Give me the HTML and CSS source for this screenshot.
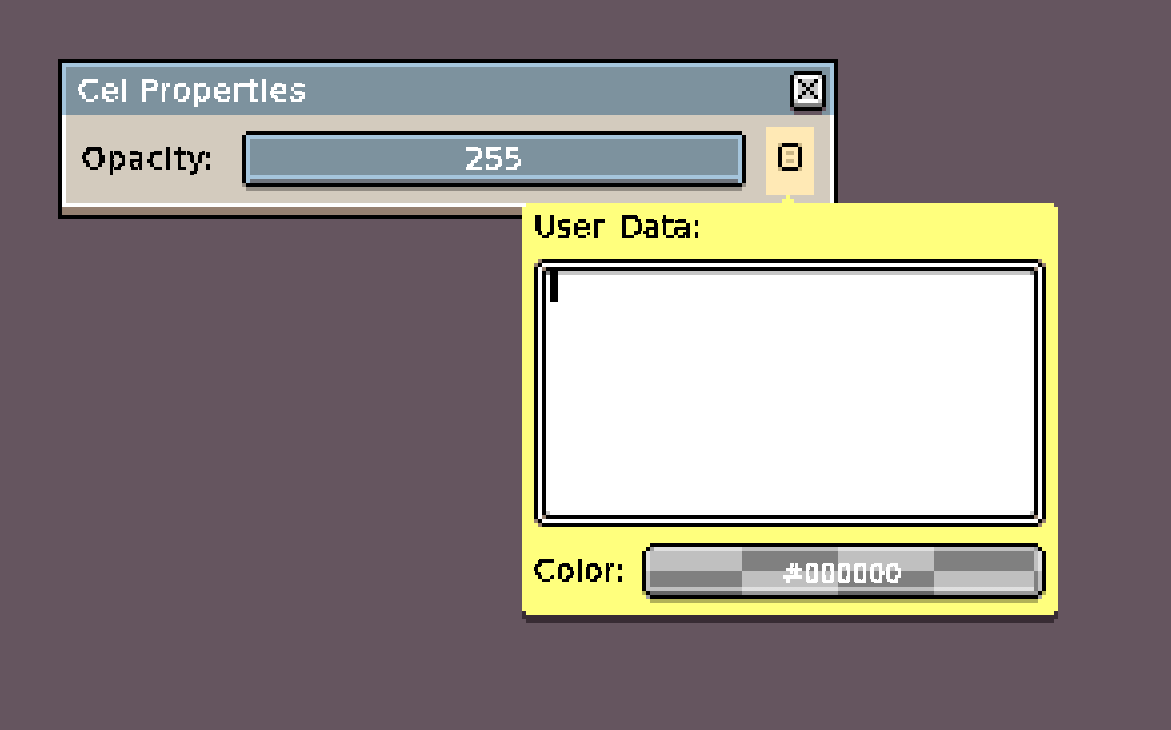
FILE: index.html
```html
<!DOCTYPE html>
<html lang="en">
<head>
<meta charset="utf-8">
<title>Cel Properties</title>
<link rel="stylesheet" href="styles.css">
</head>
<body>
<svg class="defs" width="0" height="0" aria-hidden="true">
  <filter id="px" x="0" y="0" width="100%" height="100%" color-interpolation-filters="sRGB">
    <feFlood x="1" y="1" width="2" height="2" flood-color="#000" result="dot"/>
    <feComposite in="dot" in2="dot" operator="over" x="0" y="0" width="4" height="4" result="cell"/>
    <feTile in="cell" result="grid"/>
    <feComposite in="SourceGraphic" in2="grid" operator="in"/>
    <feMorphology operator="dilate" radius="1"/>
    <feComponentTransfer><feFuncA type="discrete" tableValues="0 1 1 1"/></feComponentTransfer>
  </filter>
</svg>

<section class="window">
  <header class="titlebar">
    <span class="px title">Cel Properties</span>
    <svg class="close" width="36" height="44" viewBox="0 0 36 44" shape-rendering="crispEdges">
      <path fill="#000" d="M4 0h28v4H4zM0 4h4v32H0zM32 4h4v32h-4zM4 36h28v4H4z"/>
      <path fill="#65555f" d="M0 36h4v4H0zM32 36h4v4h-4zM4 40h28v4H4z"/>
      <path fill="#fff" d="M4 4h28v28H4z"/>
      <path fill="#c6c6c6" d="M8 8h20v20H8zM4 4h4v4H4zM28 4h4v4h-4zM4 28h4v4H4zM28 28h4v4h-4z"/>
      <path fill="#808080" d="M4 32h28v4H4z"/>
      <path fill="#000" d="M8 8h4v4H8zM24 8h4v4h-4zM12 12h4v4h-4zM20 12h4v4h-4zM16 16h4v4h-4zM12 20h4v4h-4zM20 20h4v4h-4zM8 24h4v4H8zM24 24h4v4h-4z"/>
    </svg>
  </header>
  <div class="body">
    <span class="px opacity-label">Opacity:</span>
    <div class="slider"><span class="px value">255</span></div>
    <div class="data-btn">
      <svg width="24" height="28" viewBox="0 0 24 28" shape-rendering="crispEdges">
        <path fill="#c9b585" d="M0 0h4v4H0zM20 0h4v4h-4zM0 24h4v4H0zM20 24h4v4h-4zM8 8h8v4H8zM8 16h8v4H8z"/>
        <path fill="#000" d="M4 0h16v4H4zM0 4h4v20H0zM20 4h4v20h-4zM4 24h16v4H4z"/>
      </svg>
    </div>
  </div>
  <div class="footer"></div>
</section>

<section class="popup">
  <div class="px data-label">User Data:</div>
  <div class="frame">
    <div class="field"><span class="cursor"></span></div>
  </div>
  <div class="color-row">
    <span class="px color-label">Color:</span>
    <div class="swatch-wrap">
      <div class="swatch"><span class="px hex">#000000</span></div>
    </div>
  </div>
</section>
</body>
</html>
```
FILE: styles.css
```css
:root {
  --k: linear-gradient(#000, #000);
  --tan: linear-gradient(#958070, #958070);
  --w: linear-gradient(#fff, #fff);
  --g: linear-gradient(#c6c6c6, #c6c6c6);
  --hi: linear-gradient(rgba(255,255,255,.5), rgba(255,255,255,.5));
  --lo: linear-gradient(rgba(0,0,0,.2), rgba(0,0,0,.2));
  --c0: linear-gradient(#c0c0c0, #c0c0c0);
  --sh: linear-gradient(rgba(0,0,0,.3), rgba(0,0,0,.3));
  --mid: linear-gradient(#a0a0a0, #a0a0a0);
  --sky: #a5c5dc;
  --steel: #7d929e;
}
* { box-sizing: border-box; }
html, body { margin: 0; height: 100%; }
body {
  background: #65555f;
  font-family: "DejaVu Sans", "Liberation Sans", sans-serif;
  overflow: hidden;
}
.defs { position: absolute; }

.px {
  display: block;
  filter: url(#px);
  white-space: nowrap;
  font-size: 30px;
  line-height: 48px;
  height: 48px;
}

/* window */
.window {
  position: absolute;
  left: 58px;
  top: 59px;
  width: 780px;
  height: 160px;
  border: 4px solid #000;
  display: flex;
  flex-direction: column;
}
.titlebar {
  height: 52px;
  display: flex;
  align-items: flex-start;
  justify-content: space-between;
  padding: 8px 8px 0 16px;
  background:
    var(--w) 0 0 / 4px 4px no-repeat,
    var(--w) right 0 top 0 / 4px 4px no-repeat,
    var(--steel);
  box-shadow: inset 0 4px 0 var(--sky), inset 4px 0 0 var(--sky), inset -4px 0 0 var(--sky);
}
.title { color: #fff; width: 260px; height: 40px; line-height: 40px; letter-spacing: 1.6px; word-spacing: -2px; }
.close { display: block; }

.body {
  flex: 1;
  display: flex;
  align-items: flex-start;
  padding: 12px 0 0 16px;
  background: #d3cbbe;
  border: solid #fff;
  border-width: 0 4px 4px;
}
.opacity-label { width: 160px; margin-top: 8px; letter-spacing: 1.25px; }
.slider {
  width: 496px;
  height: 48px;
  margin: 8px 0 0 4px;
  display: flex;
  justify-content: center;
  background:
    var(--w) right 4px top 0 / 4px 4px no-repeat,
    var(--w) 4px 0 / 4px 4px no-repeat,
    var(--steel);
  box-shadow:
    inset 0 4px 0 var(--sky),
    inset 4px 0 0 var(--sky),
    inset -4px 0 0 var(--sky),
    inset 0 -4px 0 #6f747c,
    inset 0 -8px 0 var(--sky),
    0 -4px 0 #000, 4px 0 0 #000, -4px 0 0 #000, 0 4px 0 #000,
    0 8px 0 rgba(0,0,0,.3), 4px 4px 0 rgba(0,0,0,.3), -4px 4px 0 rgba(0,0,0,.3);
}
.value { color: #fff; width: 64px; text-align: center; }
.data-btn {
  width: 48px;
  height: 68px;
  margin-left: 24px;
  padding-bottom: 8px;
  background: #ffe9b5;
  display: flex;
  align-items: center;
  justify-content: center;
}
.footer { height: 8px; background: #958070; }

/* popup */
.popup {
  position: absolute;
  left: 526px;
  top: 207px;
  width: 528px;
  height: 404px;
  padding-left: 8px;
  background: #ffff7d;
  box-shadow:
    0 -4px 0 #ffff7d, 4px 0 0 #ffff7d, -4px 0 0 #ffff7d, 0 4px 0 #ffff7d,
    0 12px 0 #382c34, 4px 8px 0 #382c34, -4px 8px 0 #382c34;
}
.popup::before {
  content: "";
  position: absolute;
  left: 260px;
  top: -12px;
  width: 4px;
  height: 4px;
  background: #ffff7d;
  box-shadow: -4px 4px 0 #ffff7d, 0 4px 0 #ffff7d, 4px 4px 0 #ffff7d;
}
.data-label { height: 52px; line-height: 40px; width: 200px; letter-spacing: .3px; word-spacing: 6px; }
.frame {
  width: 512px;
  height: 268px;
  padding: 8px;
  background:
    var(--tan) 4px 0 / 4px 4px no-repeat,
    var(--tan) 0 4px / 4px 4px no-repeat,
    var(--tan) right 4px top 0 / 4px 4px no-repeat,
    var(--tan) right 0 top 4px / 4px 4px no-repeat,
    var(--tan) left 4px bottom 0 / 4px 4px no-repeat,
    var(--tan) left 0 bottom 4px / 4px 4px no-repeat,
    var(--tan) right 4px bottom 0 / 4px 4px no-repeat,
    var(--tan) right 0 bottom 4px / 4px 4px no-repeat,
    var(--k) 4px 4px / 4px 4px no-repeat,
    var(--k) right 4px top 4px / 4px 4px no-repeat,
    var(--k) left 4px bottom 4px / 4px 4px no-repeat,
    var(--k) right 4px bottom 4px / 4px 4px no-repeat,
    var(--k) 8px 0 / 496px 4px no-repeat,
    var(--k) left 8px bottom 0 / 496px 4px no-repeat,
    var(--k) 0 8px / 4px 252px no-repeat,
    var(--k) right 0 top 8px / 4px 252px no-repeat,
    var(--w) 4px 4px / 504px 260px no-repeat;
}
.field {
  width: 496px;
  height: 252px;
  padding: 4px 0 0 8px;
  background:
    var(--tan) 0 0 / 4px 4px no-repeat,
    var(--tan) right 0 top 0 / 4px 4px no-repeat,
    var(--tan) left 0 bottom 0 / 4px 4px no-repeat,
    var(--tan) right 0 bottom 0 / 4px 4px no-repeat,
    var(--k) 4px 0 / 488px 4px no-repeat,
    var(--k) left 4px bottom 0 / 488px 4px no-repeat,
    var(--k) 0 4px / 4px 244px no-repeat,
    var(--k) right 0 top 4px / 4px 244px no-repeat,
    linear-gradient(#808080, #808080) 4px 4px / 4px 4px no-repeat,
    linear-gradient(#808080, #808080) right 4px top 4px / 4px 4px no-repeat,
    var(--g) 4px 4px / 488px 4px no-repeat,
    var(--g) left 4px bottom 4px / 4px 4px no-repeat,
    var(--g) right 4px bottom 4px / 4px 4px no-repeat,
    #fff;
}
.cursor { display: block; width: 8px; height: 31px; background: #000; }

.color-row {
  display: flex;
  align-items: flex-start;
  margin-top: 16px;
}
.color-label { width: 108px; padding-top: 4px; height: 52px; letter-spacing: .7px; }
.swatch-wrap {
  width: 404px;
  height: 60px;
  padding: 4px;
  background:
    var(--k) 8px 0 / 388px 4px no-repeat,
    var(--k) 8px 52px / 388px 4px no-repeat,
    var(--k) 0 8px / 4px 40px no-repeat,
    var(--k) right 0 top 8px / 4px 40px no-repeat,
    var(--sh) 8px 56px / 388px 4px no-repeat,
    var(--sh) 0 48px / 4px 4px no-repeat,
    var(--sh) right 0 top 48px / 4px 4px no-repeat,
    var(--mid) 4px 52px / 4px 4px no-repeat,
    var(--mid) right 4px top 52px / 4px 4px no-repeat;
}
.swatch {
  width: 396px;
  height: 48px;
  padding-left: 136px;
  background:
    var(--k) 0 0 / 4px 4px no-repeat,
    var(--k) right 0 top 0 / 4px 4px no-repeat,
    var(--k) 0 44px / 4px 4px no-repeat,
    var(--k) right 0 top 44px / 4px 4px no-repeat,
    var(--mid) 4px 0 / 4px 4px no-repeat,
    var(--mid) right 4px top 0 / 4px 4px no-repeat,
    linear-gradient(#e0e0e0 50%, #c0c0c0 50%) 0 4px / 4px 40px no-repeat,
    linear-gradient(#e0e0e0 50%, #c0c0c0 50%) right 0 top 4px / 4px 40px no-repeat,
    linear-gradient(#c0c0c0 50%, #808080 50%) right 4px top 4px / 4px 40px no-repeat,
    var(--hi) 0 0 / 100% 4px no-repeat,
    var(--hi) 0 40px / 100% 4px no-repeat,
    var(--lo) 0 44px / 100% 4px no-repeat,
    var(--c0) 0 0 / 96px 24px no-repeat,
    var(--c0) 96px 24px / 96px 24px no-repeat,
    var(--c0) 192px 0 / 96px 24px no-repeat,
    var(--c0) 288px 24px / 108px 24px no-repeat,
    #808080;
}
.hex { color: #fff; width: 124px; font-size: 26px; line-height: 54px; letter-spacing: -.3px; }
```
